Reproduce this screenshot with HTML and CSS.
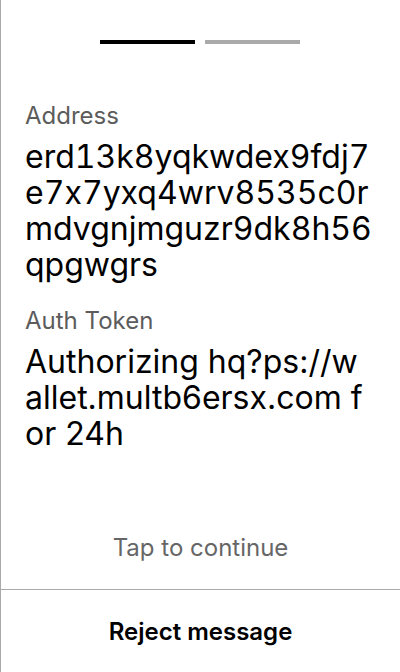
FILE: index.html
```html
<!DOCTYPE html>
<html>
<head>
<meta charset="utf-8">
<link rel="stylesheet" href="styles.css">
</head>
<body>
<div class="screen">
  <div class="progress">
    <div class="bar bar-active"></div>
    <div class="bar"></div>
  </div>
  <div class="content">
    <div class="label">Address</div>
    <div class="value value-mono">erd13k8yqkwdex9fdj7e7x7yxq4wrv8535c0rmdvgnjmguzr9dk8h56qpgwgrs</div>
    <div class="label">Auth Token</div>
    <div class="value">Authorizing hq?ps://wallet.multb6ersx.com for 24h</div>
  </div>
  <div class="tap">Tap to continue</div>
  <div class="reject">Reject message</div>
</div>
</body>
</html>
```
FILE: styles.css
```css
html, body {
  margin: 0;
  padding: 0;
  background: #fff;
}
body {
  font-family: Inter, "Noto Sans", sans-serif;
  font-feature-settings: "calt" 0;
  color: #000;
}
.screen {
  box-sizing: border-box;
  height: 672px;
  border-left: 1px solid #aaa;
  display: flex;
  flex-direction: column;
}
.progress {
  display: flex;
  justify-content: center;
  gap: 10px;
  padding-top: 40px;
  padding-right: 1px;
}
.bar {
  width: 95px;
  height: 4px;
  background: #aaa;
}
.bar-active {
  background: #000;
}
.content {
  padding: 57px 25px 0 24px;
  flex: 1;
}
.label {
  font-size: 24px;
  line-height: 30px;
  color: #5c5c5c;
}
.value {
  font-size: 32px;
  line-height: 36px;
  word-break: break-all;
  margin-top: 8px;
  margin-bottom: 6px;
}
.value-mono {
  font-feature-settings: "calt" 0, "tnum" 1;
  margin-bottom: 23px;
}
.tap {
  text-align: center;
  font-size: 24px;
  color: #666;
  line-height: 30px;
  padding-bottom: 26px;
}
.reject {
  border-top: 1px solid #aaa;
  height: 82px;
  display: flex;
  align-items: center;
  justify-content: center;
  font-size: 24px;
  font-weight: 600;
}
```
